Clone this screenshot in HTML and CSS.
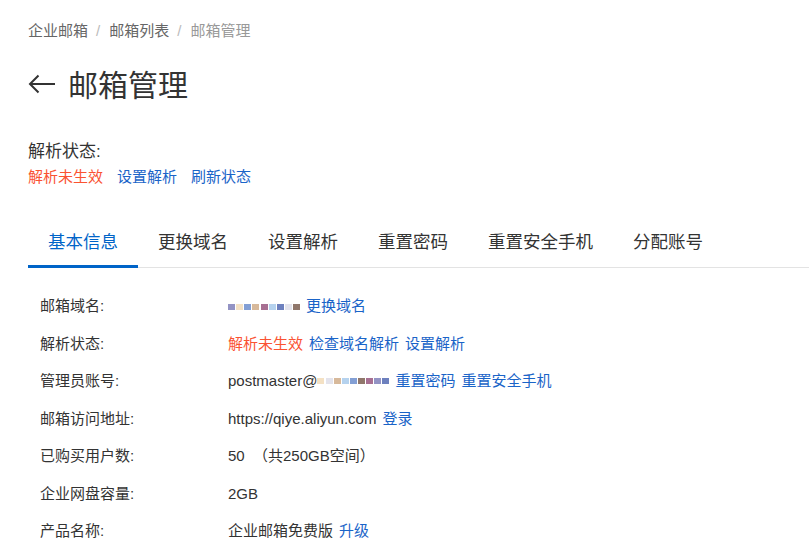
FILE: index.html
```html
<!DOCTYPE html>
<html lang="zh-CN">
<head>
<meta charset="utf-8">
<title>邮箱管理</title>
<link rel="stylesheet" href="styles.css">
</head>
<body>
<div class="page">
  <div class="breadcrumb">
    <span class="crumb">企业邮箱</span><span class="sep">/</span><span class="crumb">邮箱列表</span><span class="sep">/</span><span class="crumb current">邮箱管理</span>
  </div>
  <div class="title-row">
    <svg class="back" width="28" height="20" viewBox="0 0 28 20"><path d="M27 10H2M10.5 1.5L2 10l8.5 8.5" fill="none" stroke="#333" stroke-width="2"/></svg>
    <h1 class="title">邮箱管理</h1>
  </div>
  <div class="status-label">解析状态:</div>
  <div class="status-links">
    <span class="warn">解析未生效</span>
    <a class="link">设置解析</a>
    <a class="link">刷新状态</a>
  </div>
  <div class="tabs">
    <div class="tab active">基本信息</div>
    <div class="tab">更换域名</div>
    <div class="tab">设置解析</div>
    <div class="tab">重置密码</div>
    <div class="tab">重置安全手机</div>
    <div class="tab">分配账号</div>
  </div>
  <div class="info">
    <div class="row"><div class="label">邮箱域名:</div><div class="value"><span class="mosaic m1"><i class="c1"></i><i class="c2"></i><i class="c3"></i><i class="c4"></i><i class="c5"></i><i class="c6"></i><i class="c7"></i><i class="c8"></i><i class="c9"></i></span><a class="link">更换域名</a></div></div>
    <div class="row"><div class="label">解析状态:</div><div class="value"><span class="warn">解析未生效</span><a class="link">检查域名解析</a><a class="link">设置解析</a></div></div>
    <div class="row"><div class="label">管理员账号:</div><div class="value"><span>postmaster@<span class="mosaic m2"><i class="c2"></i><i class="c8"></i><i class="c4"></i><i class="c6"></i><i class="c3"></i><i class="c9"></i><i class="c5"></i><i class="c1"></i><i class="c7"></i></span></span><a class="link">重置密码</a><a class="link">重置安全手机</a></div></div>
    <div class="row"><div class="label">邮箱访问地址:</div><div class="value"><span>https://qiye.aliyun.com</span><a class="link">登录</a></div></div>
    <div class="row"><div class="label">已购买用户数:</div><div class="value"><span>50 &nbsp;（共250GB空间）</span></div></div>
    <div class="row"><div class="label">企业网盘容量:</div><div class="value"><span>2GB</span></div></div>
    <div class="row"><div class="label">产品名称:</div><div class="value"><span>企业邮箱免费版</span><a class="link">升级</a></div></div>
  </div>
</div>
</body>
</html>
```
FILE: styles.css
```css
html, body {
  margin: 0;
  padding: 0;
  background: #fff;
}
body {
  font-family: "Liberation Sans", "Noto Sans CJK SC", sans-serif;
  color: #333;
}
.page {
  padding: 21px 0 0 28px;
}
.breadcrumb {
  font-size: 15px;
  line-height: 20px;
  color: #666;
  display: flex;
}
.sep {
  color: #bbb;
  margin: 0 9px 0 8px;
}
.crumb.current {
  color: #999;
}
.title-row {
  margin-top: 25px;
  display: flex;
  align-items: center;
  gap: 12px;
  height: 40px;
}
.back {
  display: block;
  margin-top: -5px;
}
.title {
  margin: 0;
  font-size: 30px;
  line-height: 40px;
  font-weight: 400;
  color: #333;
}
.status-label {
  margin-top: 34px;
  font-size: 17px;
  line-height: 23px;
  color: #333;
}
.status-links {
  margin-top: 4px;
  font-size: 15px;
  line-height: 20px;
  display: flex;
  gap: 14px;
}
.warn {
  color: #fa5332;
}
.link {
  color: #1a64c8;
  cursor: pointer;
}
.tabs {
  margin-top: 42px;
  display: flex;
  border-bottom: 1px solid #e3e3e3;
}
.tab {
  padding: 0 20px 10px;
  font-size: 17.5px;
  line-height: 26px;
  color: #333;
  border-bottom: 3px solid transparent;
  margin-bottom: -1px;
}
.tab.active {
  color: #0064c8;
  border-bottom-color: #0064c8;
}
.info {
  padding: 19px 0 0 12px;
  font-size: 15px;
}
.row {
  display: flex;
  line-height: 37.5px;
}
.label {
  width: 188px;
  color: #333;
}
.value {
  color: #333;
  display: flex;
  gap: 6px;
}
.mosaic {
  display: inline-flex;
  align-items: center;
  vertical-align: middle;
  height: 10px;
}
.mosaic i {
  display: block;
  width: 7px;
  height: 6px;
  opacity: 0.75;
}
.m1 {
  width: 72px;
  justify-content: space-between;
  margin-top: 15px;
}
.m2 {
  width: 72px;
  justify-content: space-between;
  margin-top: -2px;
}
.c1 { background: #6f6fb0; }
.c2 { background: #f0d7b0; }
.c3 { background: #5a7fc6; }
.c4 { background: #caa27a; }
.c5 { background: #8a3f6e; }
.c6 { background: #9cc3e8; }
.c7 { background: #3c56a8; }
.c8 { background: #d9d9e6; }
.c9 { background: #6b4a3a; }
```
